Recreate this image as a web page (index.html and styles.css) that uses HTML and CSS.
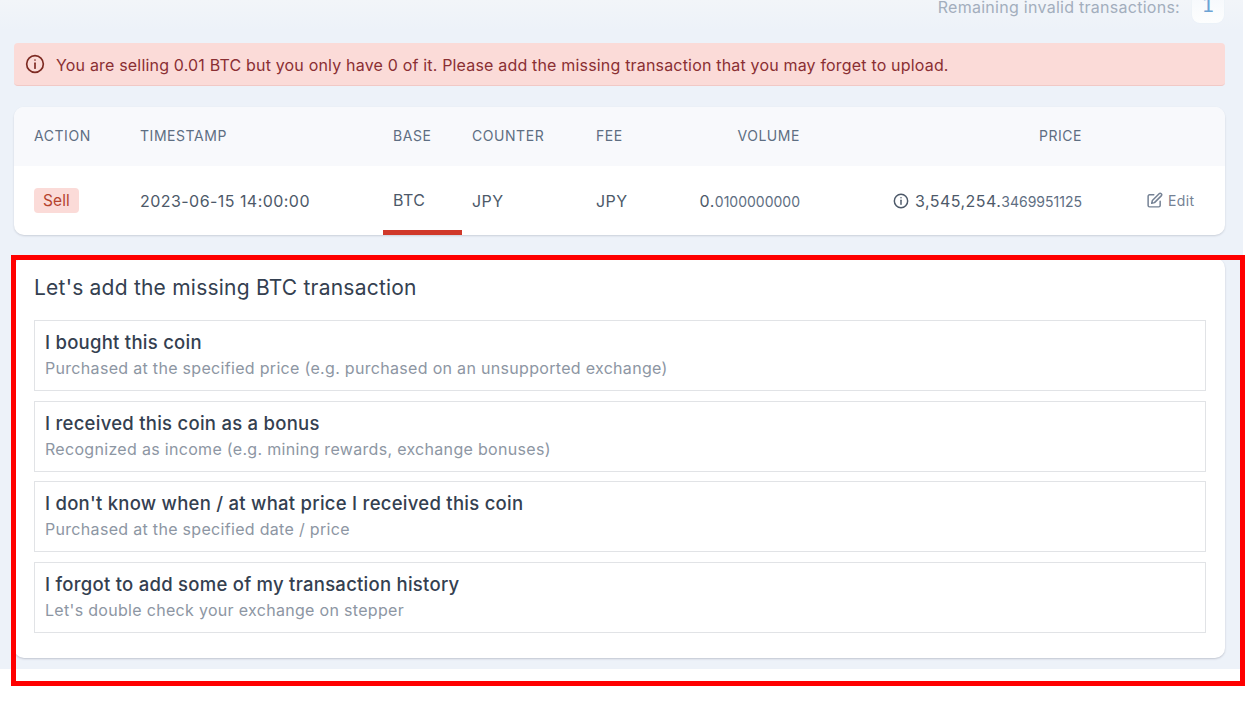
FILE: index.html
```html
<!DOCTYPE html>
<html lang="en">
<head>
<meta charset="utf-8">
<title>Missing transaction</title>
<link rel="stylesheet" href="styles.css">
</head>
<body>
<main class="page">
  <div class="remaining">
    <span class="remaining-label">Remaining invalid transactions:</span>
    <span class="remaining-count">1</span>
  </div>
  <div class="alert">
    <svg class="alert-icon" viewBox="0 0 24 24" fill="none" stroke="currentColor" stroke-width="2" stroke-linecap="round"><circle cx="12" cy="12" r="10"/><path d="M12 11v6"/><path d="M12 7.2v.1"/></svg>
    <span class="alert-text">You are selling 0.01 BTC but you only have 0 of it. Please add the missing transaction that you may forget to upload.</span>
  </div>
  <section class="table-card">
    <div class="row head">
      <div>ACTION</div>
      <div>TIMESTAMP</div>
      <div class="pad">BASE</div>
      <div class="pad">COUNTER</div>
      <div class="pad">FEE</div>
      <div class="right">VOLUME</div>
      <div class="right">PRICE</div>
      <div></div>
    </div>
    <div class="row body">
      <div><span class="badge">Sell</span></div>
      <div>2023-06-15 14:00:00</div>
      <div class="pad cell-active">BTC</div>
      <div class="pad">JPY</div>
      <div class="pad">JPY</div>
      <div class="right">0.<small>0100000000</small></div>
      <div class="right price">
        <svg class="price-icon" viewBox="0 0 24 24" fill="none" stroke="currentColor" stroke-width="2.2" stroke-linecap="round"><circle cx="12" cy="12" r="10"/><path d="M12 11v6"/><path d="M12 7.2v.1"/></svg>
        <span>3,545,254.<small>3469951125</small></span>
      </div>
      <div class="edit">
        <svg class="edit-icon" viewBox="0 0 24 24" fill="none" stroke="currentColor" stroke-width="2.1" stroke-linecap="round" stroke-linejoin="round"><path d="M11 4H5a2 2 0 0 0-2 2v13a2 2 0 0 0 2 2h13a2 2 0 0 0 2-2v-6"/><path d="M18.5 2.5a2.1 2.1 0 0 1 3 3L12 15l-4 1 1-4z"/></svg>
        <span>Edit</span>
      </div>
    </div>
  </section>
  <section class="panel">
    <h2 class="panel-title">Let's add the missing BTC transaction</h2>
    <div class="option">
      <div class="option-title">I bought this coin</div>
      <div class="option-sub">Purchased at the specified price (e.g. purchased on an unsupported exchange)</div>
    </div>
    <div class="option">
      <div class="option-title">I received this coin as a bonus</div>
      <div class="option-sub">Recognized as income (e.g. mining rewards, exchange bonuses)</div>
    </div>
    <div class="option">
      <div class="option-title">I don't know when / at what price I received this coin</div>
      <div class="option-sub">Purchased at the specified date / price</div>
    </div>
    <div class="option">
      <div class="option-title">I forgot to add some of my transaction history</div>
      <div class="option-sub">Let's double check your exchange on stepper</div>
    </div>
  </section>
</main>
<div class="highlight"></div>
</body>
</html>
```
FILE: styles.css
```css
* { box-sizing: border-box; }
html, body { margin: 0; padding: 0; background: #fff; }
body {
  position: relative;
  height: 703px;
  overflow: hidden;
  font-family: "Inter", "Liberation Sans", sans-serif;
  color: #344050;
}
.page {
  width: 1243px;
  height: 669px;
  padding: 0 18px 0 14px;
  background: linear-gradient(#f2f5f9 0, #edf2f9 30px);
  display: flex;
  flex-direction: column;
}
.remaining {
  display: flex;
  justify-content: flex-end;
  gap: 12px;
  margin-top: -8px;
  padding-right: 1px;
  height: 51px;
}
.remaining-label {
  font-size: 16px;
  letter-spacing: .27px;
  line-height: 30px;
  color: #a3aebd;
}
.remaining-count {
  width: 32px;
  height: 31px;
  background: linear-gradient(#f5f8fc, #fdfefe);
  border-radius: 8px;
  box-shadow: 0 0 1px #d8e6f5;
  color: #6ca3d4;
  text-align: center;
  font-family: "DejaVu Sans", sans-serif;
  font-size: 20px;
  line-height: 27px;
}
.alert {
  height: 43px;
  display: flex;
  align-items: center;
  padding-left: 11px;
  gap: 11px;
  background: #fbdbd8;
  border-bottom: 1px solid #f1c9c6;
  border-radius: 4px;
  color: #8a2f33;
  font-size: 16px;
  letter-spacing: .18px;
}
.alert-text { padding-top: 2px; }
.alert-icon { width: 20px; height: 20px; color: #7d2a22; flex: none; }
.table-card {
  margin-top: 21px;
  height: 128px;
  background: #fff;
  border-radius: 10px;
  box-shadow: 0 1px 2px rgba(65, 69, 88, .2);
  overflow: hidden;
}
.row {
  display: grid;
  grid-template-columns: 106px 243px 79px 124px 80px 134px 282px 1fr;
  padding-left: 20px;
  align-items: center;
}
.head {
  height: 59px;
  padding-bottom: 2px;
  background: #f8f9fc;
  color: #5e6e82;
  font-size: 14px;
  letter-spacing: .55px;
}
.body {
  height: 69px;
  font-size: 16px;
  letter-spacing: .45px;
  color: #4d5969;
}
.pad { padding-left: 10px; }
.right { text-align: right; }
small { font-size: 14px; letter-spacing: 0; color: #5e6e82; }
.badge {
  display: inline-block;
  padding: 0 9px;
  height: 25px;
  line-height: 25px;
  background: #fbdbd8;
  border-radius: 4px;
  color: #b5432e;
  font-size: 15.5px;
  letter-spacing: .1px;
}
.cell-active {
  height: 100%;
  display: flex;
  align-items: center;
  border-bottom: 5px solid #d0392a;
  padding-top: 3px;
}
.price { display: flex; justify-content: flex-end; align-items: center; gap: 6px; }
.price-icon { width: 16px; height: 16px; color: #4d5969; }
.edit {
  display: flex;
  align-items: center;
  gap: 5px;
  padding-left: 64px;
  font-size: 14px;
  letter-spacing: .35px;
  color: #748194;
}
.edit-icon { width: 17px; height: 17px; }
.panel {
  margin-top: 23px;
  height: 400px;
  background: #fff;
  border-radius: 10px;
  box-shadow: 0 1px 2px rgba(65, 69, 88, .25);
  padding: 14px 19px 0 20px;
  display: flex;
  flex-direction: column;
}
.panel-title {
  margin: 0 0 16px;
  height: 32px;
  line-height: 32px;
  font-size: 21px;
  font-weight: 400;
  letter-spacing: .22px;
  color: #344050;
}
.option {
  height: 71px;
  border: 1px solid #e1e3e6;
  padding: 9px 10px 0;
  margin-bottom: 9.67px;
}
.option-title {
  font-size: 18.5px;
  line-height: 24px;
  font-weight: 500;
  letter-spacing: .26px;
  color: #344050;
}
.option-sub {
  font-size: 16px;
  line-height: 24px;
  margin-top: 2px;
  letter-spacing: .31px;
  color: #8d96a3;
}
.highlight {
  position: absolute;
  left: 11px;
  top: 255px;
  width: 1234px;
  height: 431px;
  border: 5px solid #f00;
}
```
